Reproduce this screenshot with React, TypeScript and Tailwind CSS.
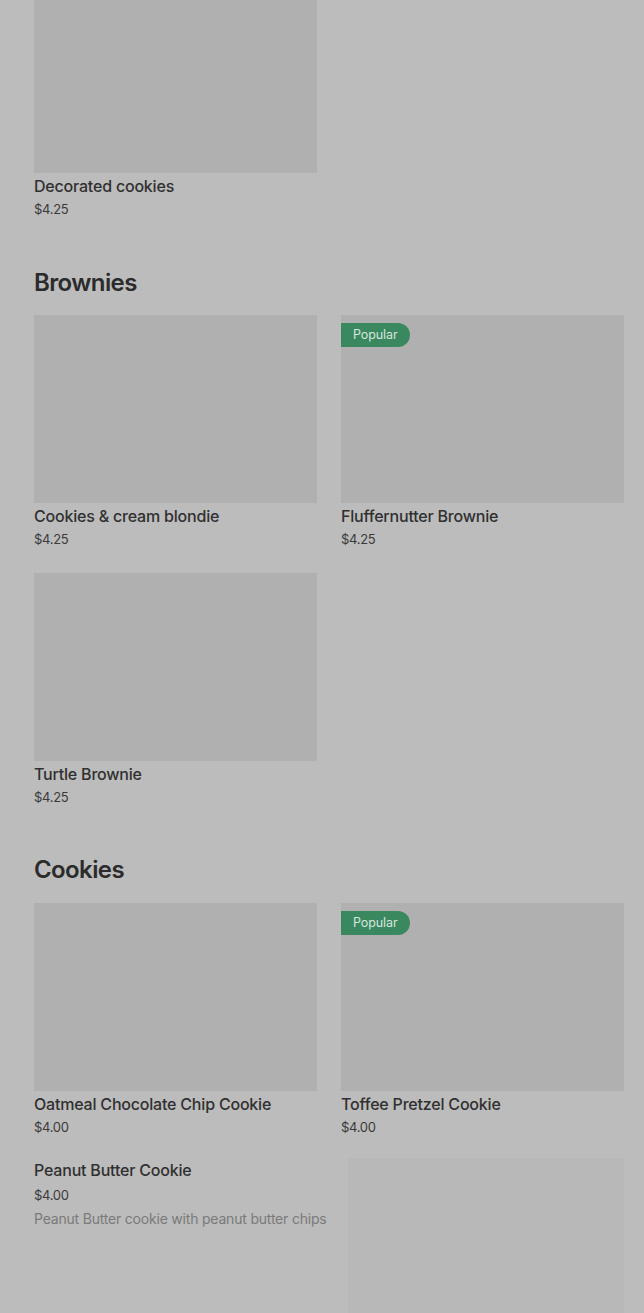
type Item = {
  name: string;
  price: string;
  popular?: boolean;
};

const brownies: Item[] = [
  { name: "Cookies & cream blondie", price: "$4.25" },
  { name: "Fluffernutter Brownie", price: "$4.25", popular: true },
  { name: "Turtle Brownie", price: "$4.25" },
];

const cookies: Item[] = [
  { name: "Oatmeal Chocolate Chip Cookie", price: "$4.00" },
  { name: "Toffee Pretzel Cookie", price: "$4.00", popular: true },
];

function ItemCard({ item, imageClass = "h-[188px]" }: { item: Item; imageClass?: string }) {
  return (
    <div className="flex flex-col">
      <div className={`relative w-full bg-[#b0b0b0] ${imageClass}`}>
        {item.popular && (
          <span className="absolute left-0 top-2 flex h-6 items-center rounded-r-full bg-[#3a8860] pl-3 pr-3 text-[12.5px] leading-none tracking-[-0.1px] text-[#d6e6dc]">
            Popular
          </span>
        )}
      </div>
      <div className="mt-[3px] text-[16px] font-medium leading-5 tracking-[-0.2px] text-[#303030]">{item.name}</div>
      <div className="mt-[3px] text-[13px] leading-5 tracking-[-0.3px] text-[#3a3a3a]">{item.price}</div>
    </div>
  );
}

function SectionTitle({ children }: { children: string }) {
  return (
    <h2 className="text-[24px] font-semibold leading-8 tracking-[-0.6px] text-[#2b2b2b]">{children}</h2>
  );
}

export default function App() {
  return (
    <div
      className="min-h-[1313px] w-full overflow-hidden bg-[#bcbcbc] pl-[34px] pr-5"
      style={{ fontFamily: "Inter, 'Noto Sans', sans-serif" }}
    >
      <div className="grid grid-cols-2 gap-x-6">
        <ItemCard item={{ name: "Decorated cookies", price: "$4.25" }} imageClass="h-[173px]" />
      </div>

      <div className="mt-[48px]">
        <SectionTitle>Brownies</SectionTitle>
        <div className="mt-4 grid grid-cols-2 gap-x-6 gap-y-6">
          {brownies.map((b) => (
            <ItemCard key={b.name} item={b} />
          ))}
        </div>
      </div>

      <div className="mt-[47px]">
        <SectionTitle>Cookies</SectionTitle>
        <div className="mt-[17px] grid grid-cols-2 gap-x-6 gap-y-6">
          {cookies.map((c) => (
            <ItemCard key={c.name} item={c} />
          ))}
        </div>

        <div className="mt-[21px] flex">
          <div className="flex w-[314px] flex-col pt-[2px]">
            <div className="text-[16px] font-medium leading-5 tracking-[-0.2px] text-[#303030]">Peanut Butter Cookie</div>
            <div className="mt-[5px] text-[13px] leading-5 tracking-[-0.3px] text-[#3a3a3a]">$4.00</div>
            <div className="mt-1 whitespace-nowrap text-[14px] leading-5 tracking-[-0.2px] text-[#7a7a7a]">
              Peanut Butter cookie with peanut butter chips
            </div>
          </div>
          <div className="h-[200px] flex-1 bg-[#b8b8b8]" />
        </div>
      </div>
    </div>
  );
}
